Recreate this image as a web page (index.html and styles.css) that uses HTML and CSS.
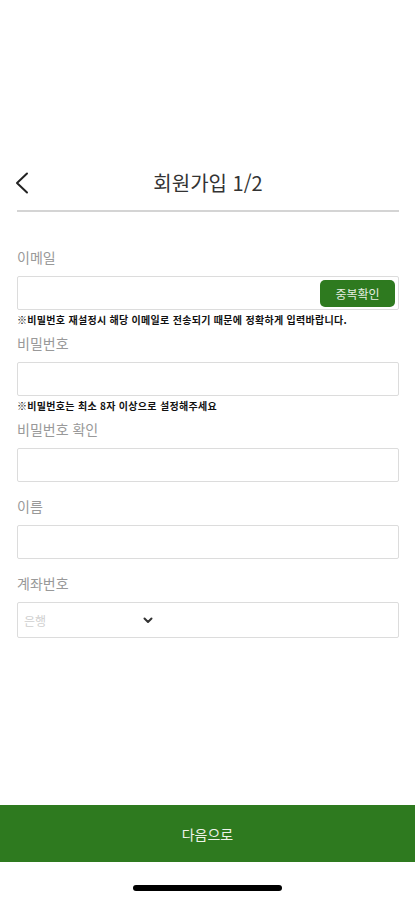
FILE: index.html
```html
<!DOCTYPE html>
<html lang="ko">
<head>
  <meta charset="UTF-8">
  <meta name="viewport" content="width=device-width, initial-scale=1.0">
  <title>회원가입</title>
  <link rel="stylesheet" href="styles.css">
</head>
<body>

<div class="page">
  <!-- Header -->
  <div class="header">
    <button class="back" aria-label="뒤로">
      <svg width="14" height="22" viewBox="0 0 14 22">
        <polyline points="12,1.5 2,11 12,20.5" fill="none" stroke="#222" stroke-width="2" stroke-linecap="round" stroke-linejoin="round"/>
      </svg>
    </button>
    <div class="title">회원가입 1/2</div>
  </div>

  <!-- Form -->
  <div class="form">
    <div class="field with-note">
      <label class="label">이메일</label>
      <div class="email-box">
        <input type="email">
        <button class="check">중복확인</button>
      </div>
      <div class="note">※비밀번호 재설정시 해당 이메일로 전송되기 때문에 정확하게 입력바랍니다.</div>
    </div>

    <div class="field with-note">
      <label class="label">비밀번호</label>
      <input class="input" type="password">
      <div class="note">※비밀번호는 최소 8자 이상으로 설정해주세요</div>
    </div>

    <div class="field">
      <label class="label">비밀번호 확인</label>
      <input class="input" type="password">
    </div>

    <div class="field">
      <label class="label">이름</label>
      <input class="input" type="text">
    </div>

    <div class="field">
      <label class="label">계좌번호</label>
      <div class="select-box">
        <select class="bank">
          <option>은행</option>
        </select>
        <svg width="10" height="7" viewBox="0 0 10 7">
          <polyline points="1.5,1.5 5,5 8.5,1.5" fill="none" stroke="#333" stroke-width="2" stroke-linecap="round" stroke-linejoin="round"/>
        </svg>
      </div>
    </div>
  </div>

  <!-- Footer -->
  <div class="footer">
    <button class="next">다음으로</button>
    <div class="home-area">
      <div class="home-bar"></div>
    </div>
  </div>
</div>

</body>
</html>
```

FILE: styles.css
```css
/* Page frame */
body {
  margin: 0;
  background-color: #fff;
  font-family: "Noto Sans CJK KR", "Noto Sans", sans-serif;
}

.page {
  display: flex;
  flex-direction: column;
  height: 900px;
}

/* Header */
.header {
  position: relative;
  display: flex;
  justify-content: center;
  align-items: center;
  height: 44px;
  margin: 160px 16px 0 17px;
  padding-bottom: 6px;
  border-bottom: 2px solid #d4d4d4;
}

.back {
  position: absolute;
  left: -2px;
  top: 12px;
  padding: 0;
  border: none;
  background: none;
}

.title {
  font-size: 20px;
  color: #333;
}

/* Form */
.form {
  padding: 35px 16px 0 17px;
}

.field {
  display: flex;
  flex-direction: column;
  margin-bottom: 14px;
}

.field.with-note {
  margin-bottom: 6px;
}

.label {
  font-size: 14px;
  line-height: 20px;
  color: #999;
  margin-bottom: 9px;
}

.input {
  height: 34px;
  box-sizing: border-box;
  border: 1px solid #dcdcdc;
  border-radius: 2px;
  outline: none;
}

.email-box {
  display: flex;
  align-items: center;
  height: 34px;
  box-sizing: border-box;
  border: 1px solid #dcdcdc;
  border-radius: 2px;
  padding-right: 3px;
}

.email-box input {
  flex: 1;
  height: 100%;
  border: none;
  outline: none;
  background: none;
}

.check {
  width: 75px;
  height: 27px;
  border: none;
  border-radius: 5px;
  background-color: #2e7a1f;
  color: #e6eee2;
  font-family: inherit;
  font-size: 12px;
}

.note {
  margin-top: 3px;
  font-size: 10px;
  line-height: 14px;
  font-weight: bold;
  letter-spacing: 0.3px;
  color: #111;
  white-space: nowrap;
}

/* Bank select */
.select-box {
  display: flex;
  align-items: center;
  height: 36px;
  box-sizing: border-box;
  border: 1px solid #dcdcdc;
  border-radius: 2px;
}

.bank {
  appearance: none;
  -webkit-appearance: none;
  width: 125px;
  padding: 0 0 0 6px;
  border: none;
  background: none;
  font-family: inherit;
  font-size: 12px;
  color: #cfcfcf;
  outline: none;
}

/* Footer */
.footer {
  margin-top: auto;
}

.next {
  display: block;
  width: 100%;
  height: 57px;
  border: none;
  background-color: #2e7a1f;
  color: #eef3ea;
  font-family: inherit;
  font-size: 14px;
}

.home-area {
  display: flex;
  justify-content: center;
  height: 38px;
  padding-top: 23px;
  box-sizing: border-box;
}

.home-bar {
  width: 149px;
  height: 6px;
  border-radius: 3px;
  background-color: #000;
}
```
